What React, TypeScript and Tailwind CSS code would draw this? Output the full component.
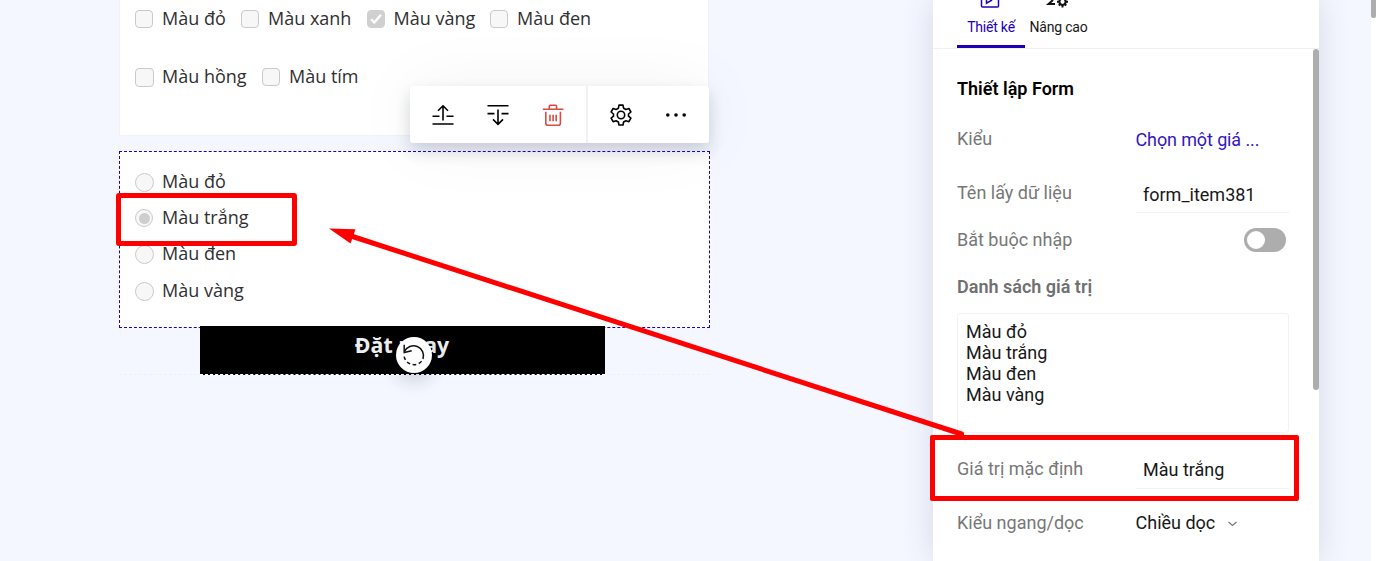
import React from "react";

const labelFont = "font-['Open_Sans',sans-serif] text-[18px] leading-[24px] text-[#303030] whitespace-nowrap";

function CheckItem({ text, width, checked = false, large = false }: { text: string; width: string; checked?: boolean; large?: boolean }) {
  return (
    <div className={`flex h-6 shrink-0 items-center ${width}`}>
      <span className="mr-[8px] flex w-[20px] shrink-0 justify-center">
        <span
          className={`flex items-center justify-center rounded-[4px] border ${large ? "size-[19px]" : "size-[18px]"} ${
            checked ? "border-[#d0d0d0] bg-[#d0d0d0]" : "border-[#cacaca] bg-[#f7f7f7]"
          }`}
        >
          {checked && (
            <svg width="14" height="14" viewBox="0 0 14 14" fill="none" stroke="#fff" strokeWidth="2.3">
              <path d="M2.2 7.2 5.3 10.6 12 2.8" />
            </svg>
          )}
        </span>
      </span>
      <span className={`${labelFont} relative -top-px`}>{text}</span>
    </div>
  );
}

function RadioItem({ text, checked = false }: { text: string; checked?: boolean }) {
  return (
    <div className={`flex items-center ${checked ? "h-[35.6px]" : "h-[36.6px]"}`}>
      <span className="mr-[8px] flex w-[20px] shrink-0 justify-center">
        <span className={`flex items-center justify-center rounded-full border border-[#cacaca] bg-[#f7f7f7] ${checked ? "size-[18px]" : "size-[19px]"}`}>
          {checked && <span className="size-[11px] rounded-full bg-[#cecece]" />}
        </span>
      </span>
      <span className={`${labelFont} relative -top-px`}>{text}</span>
    </div>
  );
}

function Toolbar() {
  return (
    <div className="absolute left-[410px] top-[86px] flex h-[57px] w-[299px] items-center rounded-[3px] bg-white text-black shadow-[0_8px_16px_rgba(30,40,60,0.18),0_0_70px_rgba(0,0,0,0.05)]">
      <div className="flex h-full w-[178px] items-center border-r-2 border-[#f1f1f3] pl-[21px]">
        <svg width="24" height="24" viewBox="0 0 24 24" fill="none" stroke="currentColor" strokeWidth="1.6">
          <path d="M12 17.5V3M7 7.8 12 2.8l5 5M1.5 13.3h7M15.5 13.3h7M1.5 21h21" />
        </svg>
        <svg className="ml-[31px]" width="24" height="24" viewBox="0 0 24 24" fill="none" stroke="currentColor" strokeWidth="1.6">
          <path d="M1.5 2.8h21M1.5 10.6h7M15.5 10.6h7M12 6.5v14.8M7 16.4l5 5 5-5" />
        </svg>
        <svg className="ml-[31px] text-[#d94a40]" width="24" height="24" viewBox="0 0 24 24" fill="none" stroke="currentColor" strokeWidth="1.6">
          <path d="M1.8 6.2h20.7M8.3 6V3.2q0-1 1-1h5.3q1 0 1 1V6M4.8 8.8v11.5q0 2 2 2h10.6q2 0 2-2V8.8M9 11.7v6.6M12.1 11.7v6.6M15.2 11.7v6.6" />
        </svg>
      </div>
      <svg className="ml-[21px]" width="24" height="24" viewBox="0 0 24 24" fill="none" stroke="currentColor" strokeWidth="1.6" strokeLinejoin="round">
        <circle cx="12" cy="12" r="3.7" />
        <path d="M10 2.1h4l.6 3.1 2.3 1.3 3-1 2 3.5-2.4 2v2.2l2.4 2-2 3.5-3-1-2.3 1.3-.6 3h-4l-.6-3-2.3-1.3-3 1-2-3.5 2.4-2V11l-2.4-2 2-3.5 3 1 2.3-1.3z" />
      </svg>
      <svg className="ml-[31px]" width="24" height="24" viewBox="0 0 24 24" fill="currentColor">
        <circle cx="3.8" cy="12" r="1.8" />
        <circle cx="12" cy="12" r="1.8" />
        <circle cx="20.2" cy="12" r="1.8" />
      </svg>
    </div>
  );
}

function Canvas() {
  return (
    <main className="w-[933px] shrink-0 pl-[119px]">
      <section className="h-[136px] w-[590px] border-x border-b border-[#f0f2f6] bg-white pl-[14px] pt-[7px]">
        <div className="flex">
          <CheckItem text="Màu đỏ" width="w-[106px]" />
          <CheckItem text="Màu xanh" width="w-[125.5px]" />
          <CheckItem text="Màu vàng" width="w-[123.5px]" checked />
          <CheckItem text="Màu đen" width="w-[120px]" />
        </div>
        <div className="mt-[34px] flex">
          <CheckItem text="Màu hồng" width="w-[127px]" large />
          <CheckItem text="Màu tím" width="w-[110px]" />
        </div>
      </section>
      <section className="mt-[15px] h-[177px] w-[591px] border border-dashed border-[#1c00b8] bg-white pl-[14px] pt-[12px]">
        <RadioItem text="Màu đỏ" />
        <RadioItem text="Màu trắng" checked />
        <RadioItem text="Màu đen" />
        <RadioItem text="Màu vàng" />
      </section>
      <section className="-mt-[2px] flex h-[49px] w-[591px] justify-center border-b border-dashed border-[#edf0f7] pr-[24px]">
        <div className="h-[49px] w-[405px] border-b border-dashed border-white bg-black pr-px pt-[6px] text-center font-['Open_Sans',sans-serif] text-[21.3px] font-bold leading-[25px] text-[#eceff0]">
          Đặt ngay
        </div>
      </section>
    </main>
  );
}

function Field({ label, className, children }: { label: string; className: string; children: React.ReactNode }) {
  return (
    <div className={`flex shrink-0 ${className}`}>
      <span className="w-[178.5px] shrink-0 text-[#777]">{label}</span>
      {children}
    </div>
  );
}

function Panel() {
  return (
    <aside className="relative flex h-[561px] w-[386px] shrink-0 flex-col bg-white font-[Roboto,sans-serif] text-[18px] leading-[24px] text-[#181818] shadow-[0_0_30px_rgba(60,70,110,0.16)]">
      <header className="flex h-[49px] shrink-0 border-b border-[#f0f0f2] pl-[24px] text-[14px] leading-[20px] tracking-[-0.2px]">
        <div className="flex h-[48px] w-[68px] flex-col items-center border-b-[3px] border-[#1c00b8] text-[#2100bb]">
          <svg className="-ml-[3px] shrink-0" width="20" height="8" viewBox="0 0 20 8" fill="none" stroke="currentColor" strokeWidth="1.5">
            <path d="M1.5 0v6q0 1 1 1h15q1 0 1-1V0M6.5 0v3.2L12 0" />
          </svg>
          <span className="mt-[9px] whitespace-nowrap">Thiết kế</span>
        </div>
        <div className="flex w-[67px] flex-col items-center">
          <svg className="-ml-[3px] shrink-0" width="24" height="8" viewBox="0 0 24 8" fill="none" stroke="#111" strokeWidth="2">
            <path d="M8 0 3.5 4.1H10" />
            <circle cx="17.5" cy="1.8" r="3.1" />
            <path d="M17.5 5v2.5M13.8 5.5l1.5-1.5M21.2 5.5l-1.5-1.5M12 1.8h2M21 1.8h2" />
          </svg>
          <span className="mt-[9px] whitespace-nowrap">Nâng cao</span>
        </div>
      </header>
      <div className="flex flex-col pl-[24px] pt-[28px]">
        <h2 className="font-semibold text-black">Thiết lập Form</h2>
        <Field label="Kiểu" className="mt-[26px] h-[24px]">
          <span className="relative top-px text-[18px] tracking-[-0.12px] text-[#3417c0]">Chọn một giá ...</span>
        </Field>
        <Field label="Tên lấy dữ liệu" className="mt-[30px] h-[32px]">
          <span className="h-[32px] w-[153px] border-b border-[#f2f2f2] pl-[7.5px] pt-[2px]">form_item381</span>
        </Field>
        <Field label="Bắt buộc nhập" className="mt-[15px] h-[24px]">
          <span className="ml-[108.5px] flex h-[24px] w-[42px] items-center rounded-full bg-[#adadad] pl-[3px]">
            <span className="size-[18px] rounded-full bg-white" />
          </span>
        </Field>
        <h3 className="mt-[23px] font-semibold text-[#707070]">Danh sách giá trị</h3>
        <div className="mt-[14px] h-[120px] w-[332px] rounded-[3px] border border-[#f2f2f2] px-[8px] pt-[7px] leading-[21px]">
          <div>Màu đỏ</div>
          <div>Màu trắng</div>
          <div>Màu đen</div>
          <div>Màu vàng</div>
        </div>
        <Field label="Giá trị mặc định" className="mt-[24px] h-[32px]">
          <span className="h-[32px] w-[153px] border-b border-[#f2f2f2] pl-[7.5px] pt-px">Màu trắng</span>
        </Field>
        <Field label="Kiểu ngang/dọc" className="mt-[22px] h-[24px]">
          <span>Chiều dọc</span>
          <svg className="ml-[12px] mt-[8px]" width="11" height="10" viewBox="0 0 11 10" fill="none" stroke="#777" strokeWidth="1.2">
            <path d="m1.5 3 4 3.5 4-3.5" />
          </svg>
        </Field>
      </div>
      <div className="absolute right-0 top-[49px] h-[341px] w-[6px] rounded-full bg-[#adadad]" />
    </aside>
  );
}

export default function App() {
  return (
    <div className="relative flex h-[561px] w-[1376px] overflow-hidden bg-[#f4f7ff]">
      <Canvas />
      <Panel />
      <div className="relative ml-auto w-[5px] bg-white">
        <div className="h-[18px] w-[5px] rounded-b-[2px] bg-[#adadad]" />
      </div>
      <Toolbar />
      <div className="absolute left-[396px] top-[337px] flex size-[36px] items-center justify-center rounded-full bg-white shadow-[0_8px_18px_rgba(30,40,60,0.18),0_0_40px_rgba(0,0,0,0.04)]">
        <svg width="24" height="24" viewBox="0 0 24 24" fill="none" stroke="#111" strokeWidth="1.5">
          <path d="M2.5 8.5A10 10 0 0 1 21 16" />
          <path d="M21 16A10 10 0 0 1 2 12" strokeDasharray="3.6 2.6" strokeDashoffset="3.6" />
          <path d="M2.2 1.8v7.8l7.5-1.9" />
        </svg>
      </div>
      <div className="absolute left-[116px] top-[193px] h-[53px] w-[181px] rounded-[3px] border-[5px] border-[#f00]" />
      <div className="absolute left-[930px] top-[435px] h-[66px] w-[369px] rounded-[2px] border-[5px] border-[#f00]" />
      <svg className="absolute left-0 top-0" width="1376" height="561" viewBox="0 0 1376 561">
        <path d="M351 236 961.5 434" stroke="#f00" strokeWidth="5" strokeLinecap="round" />
        <path d="M329 228.5 355.5 229.2 350.5 243.5Z" fill="#f00" />
      </svg>
    </div>
  );
}
